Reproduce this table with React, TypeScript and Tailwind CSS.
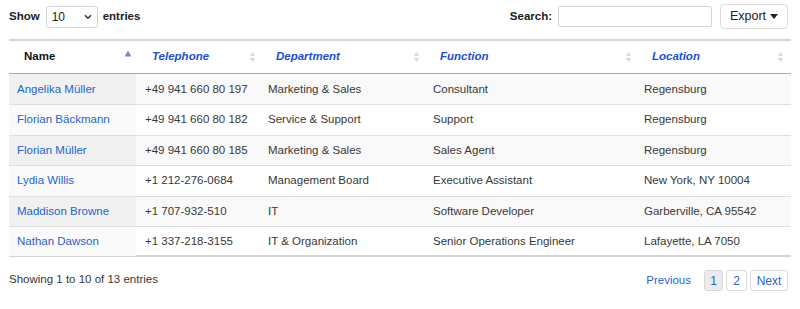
import React from "react";

const rows = [
  ["Angelika Müller", "+49 941 660 80 197", "Marketing & Sales", "Consultant", "Regensburg"],
  ["Florian Bäckmann", "+49 941 660 80 182", "Service & Support", "Support", "Regensburg"],
  ["Florian Müller", "+49 941 660 80 185", "Marketing & Sales", "Sales Agent", "Regensburg"],
  ["Lydia Willis", "+1 212-276-0684", "Management Board", "Executive Assistant", "New York, NY 10004"],
  ["Maddison Browne", "+1 707-932-510", "IT", "Software Developer", "Garberville, CA 95542"],
  ["Nathan Dawson", "+1 337-218-3155", "IT & Organization", "Senior Operations Engineer", "Lafayette, LA 7050"],
];

const cols = "grid grid-cols-[127px_124px_164px_212px_152px]";

function SortBoth() {
  return (
    <svg width="7" height="12" viewBox="0 0 7 12" className="shrink-0">
      <path d="M3.5 1 L6.5 5 L0.5 5 Z" fill="#dcdcdc" />
      <path d="M3.5 11 L6.5 7 L0.5 7 Z" fill="#dcdcdc" />
    </svg>
  );
}

function SortAsc() {
  return (
    <svg width="8" height="7" viewBox="0 0 8 7" className="shrink-0 -mt-[7px]">
      <path d="M4 0.5 L7.5 6.5 L0.5 6.5 Z" fill="#8086d6" />
    </svg>
  );
}

export default function App() {
  return (
    <div
      className="w-[800px] h-[309px] bg-white text-[#383838] text-[11.5px] px-[9px] pt-[4px]"
      style={{ fontFamily: '"Liberation Sans", Arial, sans-serif' }}
    >
      {/* top controls */}
      <div className="flex items-center justify-between h-[25px] pr-[3px]">
        <div className="flex items-center font-bold text-[#222]">
          <span>Show</span>
          <div className="ml-[6px] mr-[5px] w-[52px] h-[22px] border border-[#d4d4d4] rounded-[3px] flex items-center justify-between pl-[5px] pr-[5px] font-normal">
            <span className="text-[12px]">10</span>
            <svg width="8" height="6" viewBox="0 0 8 6">
              <path d="M1 1.2 L4 4.2 L7 1.2" stroke="#333" strokeWidth="1.5" fill="none" />
            </svg>
          </div>
          <span>entries</span>
        </div>
        <div className="flex items-center">
          <span className="font-bold mr-[6px] text-[#222]">Search:</span>
          <div className="w-[154px] h-[21px] border border-[#d4d4d4] rounded-[2px]" />
          <div className="ml-[8px] w-[68px] h-[25px] border border-[#dcdcdc] rounded-[4px] flex items-center justify-center gap-[4px] text-[12.5px] text-[#222]">
            <span>Export</span>
            <svg width="8" height="5" viewBox="0 0 8 5">
              <path d="M0 0 L8 0 L4 5 Z" fill="#222" />
            </svg>
          </div>
        </div>
      </div>

      {/* table */}
      <div className="mt-[10px] border-t-[2px] border-[#d6d6d6]">
        <div className={`${cols} h-[33px] border-b border-[#a8a8a8] font-bold`}>
          <div className="flex items-center justify-between pl-[15px] pr-[4px] text-[#111]">
            <span>Name</span>
            <SortAsc />
          </div>
          {["Telephone", "Department", "Function", "Location"].map((h) => (
            <div key={h} className="flex items-center justify-between pl-[16px] pr-[4px] italic text-[#1a4fd8]">
              <span>{h}</span>
              <SortBoth />
            </div>
          ))}
        </div>
        {rows.map((r, i) => {
          const odd = i % 2 === 0;
          return (
            <div
              key={i}
              className={`${cols} h-[30.4px] ${i > 0 ? "border-t border-[#dedede]" : ""} ${odd ? "bg-[#f9f9f9]" : "bg-white"}`}
            >
              <div className={`flex items-center pl-[8px] text-[#2463d6] ${odd ? "bg-[#f1f1f1]" : "bg-[#fafafa]"}`}>
                {r[0]}
              </div>
              <div className="flex items-center pl-[9px]">{r[1]}</div>
              <div className="flex items-center pl-[8px]">{r[2]}</div>
              <div className="flex items-center pl-[9px]">{r[3]}</div>
              <div className="flex items-center pl-[8px]">{r[4]}</div>
            </div>
          );
        })}
        <div className="h-[3px] border-t-[2px] border-[#d4d4d4] -mt-[1px]" />
      </div>

      {/* footer */}
      <div className="flex items-start justify-between mt-[10px] pr-[3px]">
        <div className="pt-[3px]">Showing 1 to 10 of 13 entries</div>
        <div className="flex items-center gap-[3px] mt-[2px]">
          <span className="text-[#2463d6] mr-[10px] text-[11.5px]">Previous</span>
          <span className="w-[19px] h-[21px] flex items-center justify-center bg-[#ebebeb] border border-[#d8d8d8] rounded-[3px] text-[#2463d6] text-[12px]">1</span>
          <span className="w-[21px] h-[21px] flex items-center justify-center border border-[#d8d8d8] rounded-[3px] text-[#2463d6] text-[12px]">2</span>
          <span className="w-[38px] h-[21px] flex items-center justify-center border border-[#d8d8d8] rounded-[3px] text-[#2463d6] text-[12px]">Next</span>
        </div>
      </div>
    </div>
  );
}
